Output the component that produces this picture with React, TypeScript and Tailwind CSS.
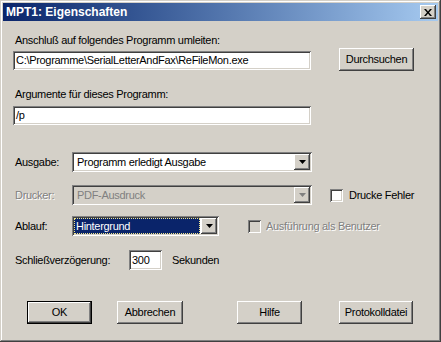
import React from "react";

// classic 3D borders
const sunken =
  "shadow-[inset_1px_1px_#808080,inset_-1px_-1px_#ffffff,inset_2px_2px_#404040,inset_-2px_-2px_#d4d0c8]";
const raised =
  "shadow-[inset_-1px_-1px_#404040,inset_1px_1px_#ffffff,inset_-2px_-2px_#808080,inset_2px_2px_#d4d0c8]";

const Arrow = ({ disabled }: { disabled?: boolean }) => (
  <div className={`w-[16px] h-[16px] bg-[#d4d0c8] flex items-center justify-center ${raised}`}>
    <svg width="7" height="4" viewBox="0 0 7 4">
      <path d="M0 0h7L3.5 4z" fill={disabled ? "#808080" : "#000"} />
    </svg>
  </div>
);

const Select = ({
  value,
  width,
  disabled,
  selected,
}: {
  value: string;
  width: string;
  disabled?: boolean;
  selected?: boolean;
}) => (
  <div
    className={`${width} h-[20px] flex items-center p-[2px] ${sunken} ${
      disabled ? "bg-[#d4d0c8]" : "bg-white"
    }`}
  >
    <div className="flex-1 h-full pr-[1px]">
      {selected ? (
        <div className="h-full bg-[#0a246a] text-white outline outline-1 outline-dotted outline-[#f0e68c] -outline-offset-1 flex items-center pl-[2px]">
          {value}
        </div>
      ) : (
        <div className={`h-full flex items-center pl-[3px] ${disabled ? "text-[#808080]" : ""}`}>{value}</div>
      )}
    </div>
    <Arrow disabled={disabled} />
  </div>
);

const TextBox = ({ value, width, h = "h-[19px]" }: { value: string; width: string; h?: string }) => (
  <div className={`${width} ${h} bg-white flex items-center pl-[3px] ${sunken}`}>{value}</div>
);

const Button = ({ label, width, isDefault }: { label: string; width: string; isDefault?: boolean }) =>
  isDefault ? (
    <div className={`${width} h-[23px] border border-black`}>
      <div className={`h-full flex items-center justify-center ${raised}`}>{label}</div>
    </div>
  ) : (
    <div className={`${width} h-[23px] flex items-center justify-center ${raised}`}>{label}</div>
  );

const Check = ({ label, disabled }: { label: string; disabled?: boolean }) => (
  <div className="flex items-center">
    <div className={`w-[13px] h-[13px] ${sunken} ${disabled ? "bg-[#d4d0c8]" : "bg-white"}`} />
    <span
      className={`${disabled ? "ml-[5px] text-[#808080] [text-shadow:1px_1px_#ffffff]" : "ml-[6px]"}`}
    >
      {label}
    </span>
  </div>
);

export default function App() {
  return (
    <div
      className="w-[441px] h-[342px] bg-[#d4d0c8] p-[3px] flex flex-col text-[11px] leading-[13px] text-black shadow-[inset_-1px_-1px_#404040,inset_1px_1px_#d4d0c8,inset_-2px_-2px_#808080,inset_2px_2px_#ffffff]"
      style={{ fontFamily: '"Liberation Sans", Arial, sans-serif' }}
    >
      {/* title bar */}
      <div className="h-[18px] flex items-center justify-between bg-gradient-to-r from-[#0a246a] to-[#a6caf0] pl-[3px] pr-[2px]">
        <span className="text-white font-bold text-[12px]">MPT1: Eigenschaften</span>
        <div className={`w-[16px] h-[14px] bg-[#d4d0c8] flex items-center justify-center ${raised}`}>
          <svg width="8" height="7" viewBox="0 0 8 7">
            <path d="M0 0h2l2 2.5L6 0h2L5 3.5 8 7H6L4 4.5 2 7H0l3-3.5z" fill="#000" />
          </svg>
        </div>
      </div>

      {/* body */}
      <div className="flex flex-col pl-[10px] pt-[13px] tracking-[-0.3px]">
        <div className="ml-[2px]">Anschluß auf folgendes Programm umleiten:</div>
        <div className="flex items-start mt-[1px]">
          <div className="mt-[3px]">
            <TextBox value="C:\Programme\SerialLetterAndFax\ReFileMon.exe" width="w-[298px]" />
          </div>
          <div className="ml-[28px]">
            <Button label="Durchsuchen" width="w-[75px]" />
          </div>
        </div>

        <div className="ml-[2px] mt-[17px]">Argumente für dieses Programm:</div>
        <div className="mt-[5px]">
          <TextBox value="/p" width="w-[298px]" />
        </div>

        <div className="flex items-center mt-[27px]">
          <div className="w-[59px] pl-[2px]">Ausgabe:</div>
          <Select value="Programm erledigt Ausgabe" width="w-[240px]" />
        </div>

        <div className="flex items-center mt-[13px]">
          <div className="w-[59px] pl-[2px] text-[#808080] [text-shadow:1px_1px_#ffffff]">Drucker:</div>
          <Select value="PDF-Ausdruck" width="w-[240px]" disabled />
          <div className="ml-[18px]">
            <Check label="Drucke Fehler" />
          </div>
        </div>

        <div className="flex items-center mt-[11px]">
          <div className="w-[59px] pl-[2px]">Ablauf:</div>
          <Select value="Hintergrund" width="w-[147px]" selected />
          <div className="ml-[29px]">
            <Check label="Ausführung als Benutzer" disabled />
          </div>
        </div>

        <div className="flex items-center mt-[14px]">
          <div className="w-[116px] pl-[2px]">Schließverzögerung:</div>
          <TextBox value="300" width="w-[33px]" h="h-[20px]" />
          <div className="ml-[10px]">Sekunden</div>
        </div>

        <div className="flex items-center mt-[31px] pl-[14px]">
          <Button label="OK" width="w-[65px]" isDefault />
          <div className="ml-[25px]">
            <Button label="Abbrechen" width="w-[66px]" />
          </div>
          <div className="ml-[54px]">
            <Button label="Hilfe" width="w-[65px]" />
          </div>
          <div className="ml-[37px]">
            <Button label="Protokolldatei" width="w-[74px]" />
          </div>
        </div>
      </div>
    </div>
  );
}
